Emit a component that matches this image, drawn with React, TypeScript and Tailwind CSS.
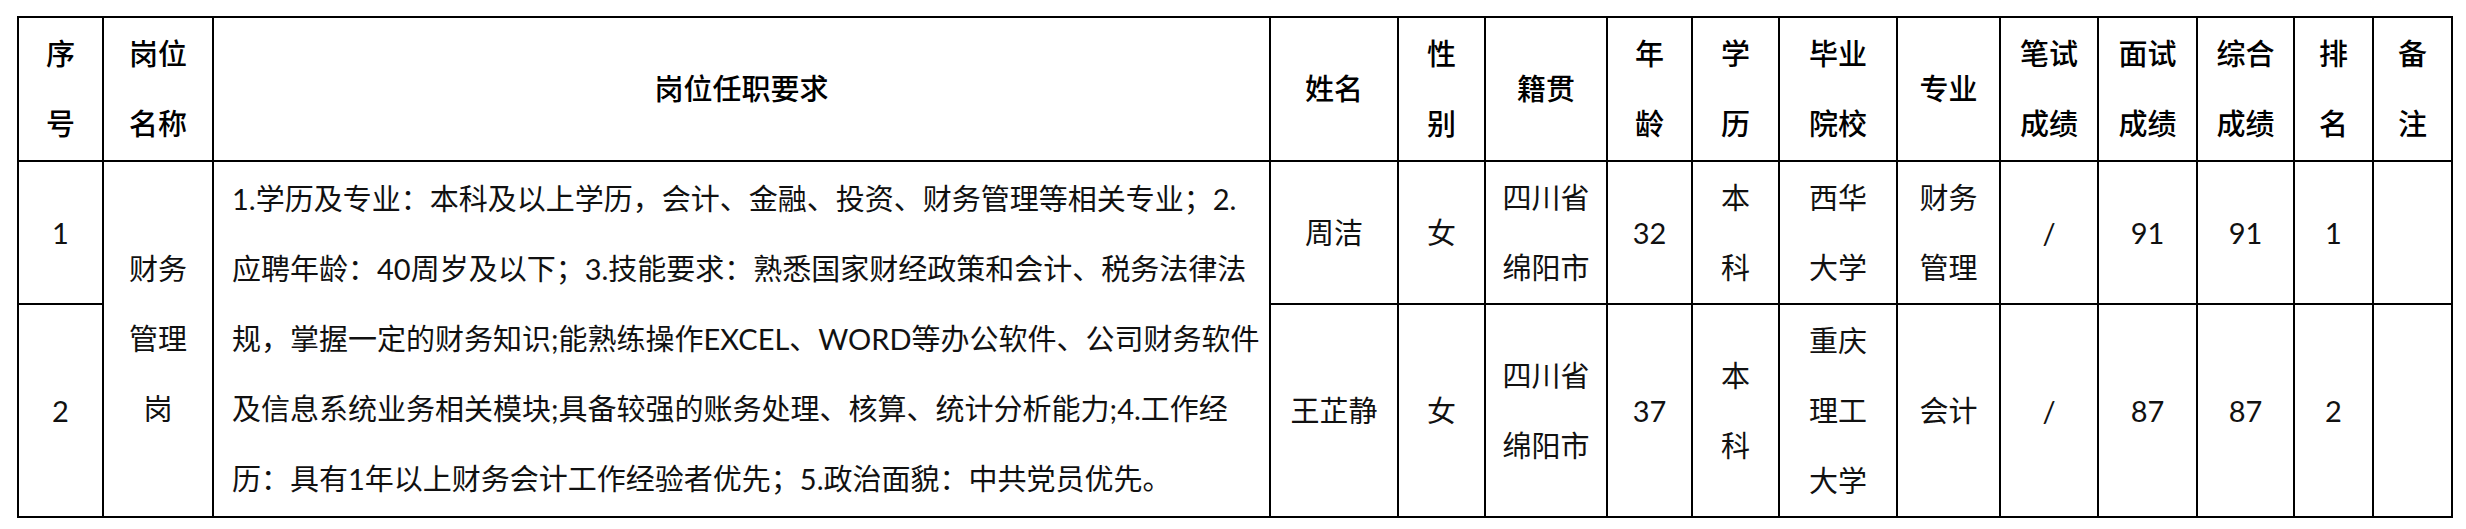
const cols = [85, 110, 1057, 128, 87, 122, 85, 87, 118, 103, 98, 99, 97, 79, 79];

const requirementLines = [
  '1.学历及专业：本科及以上学历，会计、金融、投资、财务管理等相关专业；2.',
  '应聘年龄：40周岁及以下；3.技能要求：熟悉国家财经政策和会计、税务法律法',
  '规，掌握一定的财务知识;能熟练操作EXCEL、WORD等办公软件、公司财务软件',
  '及信息系统业务相关模块;具备较强的账务处理、核算、统计分析能力;4.工作经',
  '历：具有1年以上财务会计工作经验者优先；5.政治面貌：中共党员优先。',
];

interface Row {
  no: string;
  name: string;
  gender: string;
  origin: string[];
  age: string;
  degree: string[];
  school: string[];
  major: string[];
  written: string;
  interview: string;
  total: string;
  rank: string;
  note: string;
}

const rows: Row[] = [
  {
    no: '1',
    name: '周洁',
    gender: '女',
    origin: ['四川省', '绵阳市'],
    age: '32',
    degree: ['本', '科'],
    school: ['西华', '大学'],
    major: ['财务', '管理'],
    written: '/',
    interview: '91',
    total: '91',
    rank: '1',
    note: '',
  },
  {
    no: '2',
    name: '王芷静',
    gender: '女',
    origin: ['四川省', '绵阳市'],
    age: '37',
    degree: ['本', '科'],
    school: ['重庆', '理工', '大学'],
    major: ['会计'],
    written: '/',
    interview: '87',
    total: '87',
    rank: '2',
    note: '',
  },
];

const headers: string[][] = [
  ['序', '号'],
  ['岗位', '名称'],
  ['岗位任职要求'],
  ['姓名'],
  ['性', '别'],
  ['籍贯'],
  ['年', '龄'],
  ['学', '历'],
  ['毕业', '院校'],
  ['专业'],
  ['笔试', '成绩'],
  ['面试', '成绩'],
  ['综合', '成绩'],
  ['排', '名'],
  ['备', '注'],
];

const cell = 'border-2 border-black p-0 text-center align-middle leading-[70px]';

function Lines({ lines }: { lines: string[] }) {
  return (
    <>
      {lines.map((l, i) => (
        <div key={i} className="whitespace-nowrap">
          {l}
        </div>
      ))}
    </>
  );
}

export default function App() {
  return (
    <div className="w-[2466px] h-[529px] bg-white pt-[16px] pl-[17px] font-['Lato','Noto_Sans_CJK_SC',sans-serif] text-[29px] text-black">
      <table className="table-fixed border-collapse w-[2436px]">
        <colgroup>
          {cols.map((w, i) => (
            <col key={i} style={{ width: w }} />
          ))}
        </colgroup>
        <thead>
          <tr className="h-[144px]">
            {headers.map((h, i) => (
              <th key={i} className={`${cell} font-medium`}>
                <Lines lines={h} />
              </th>
            ))}
          </tr>
        </thead>
        <tbody className="text-[#111]">
          {rows.map((r, idx) => (
            <tr key={r.no} className={idx === 0 ? 'h-[143px]' : 'h-[213px]'}>
              <td className={cell}>{r.no}</td>
              {idx === 0 && (
                <td className={cell} rowSpan={2}>
                  <Lines lines={['财务', '管理', '岗']} />
                </td>
              )}
              {idx === 0 && (
                <td className={`${cell} text-left pl-[18px]`} rowSpan={2}>
                  <Lines lines={requirementLines} />
                </td>
              )}
              <td className={cell}>{r.name}</td>
              <td className={cell}>{r.gender}</td>
              <td className={cell}>
                <Lines lines={r.origin} />
              </td>
              <td className={cell}>{r.age}</td>
              <td className={cell}>
                <Lines lines={r.degree} />
              </td>
              <td className={cell}>
                <Lines lines={r.school} />
              </td>
              <td className={cell}>
                <Lines lines={r.major} />
              </td>
              <td className={cell}>{r.written}</td>
              <td className={cell}>{r.interview}</td>
              <td className={cell}>{r.total}</td>
              <td className={cell}>{r.rank}</td>
              <td className={cell}>{r.note}</td>
            </tr>
          ))}
        </tbody>
      </table>
    </div>
  );
}
